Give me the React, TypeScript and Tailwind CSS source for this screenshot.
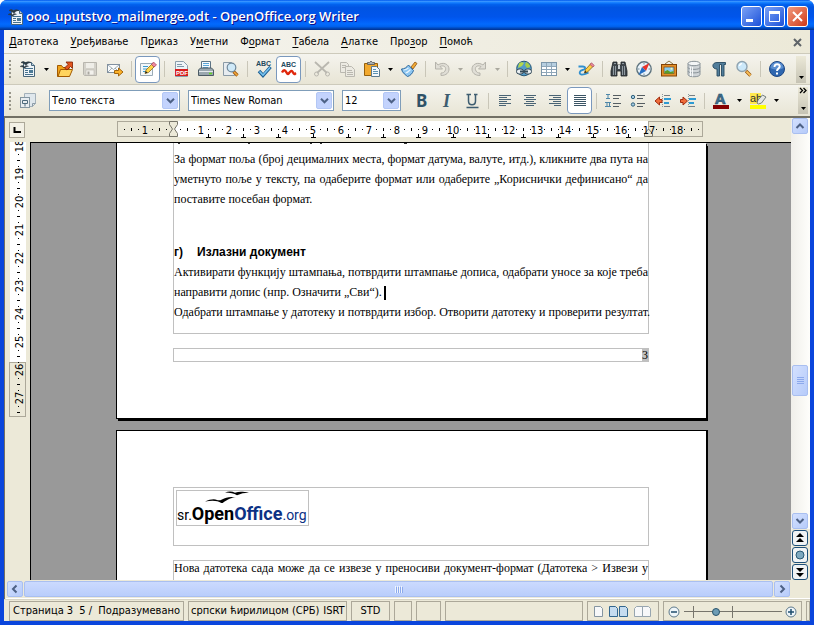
import React from "react";

const ui = "font-['DejaVu_Sans_Condensed','DejaVu_Sans','Liberation_Sans',sans-serif]";
const serif = "font-['Liberation_Serif',serif]";

/* ---------- icons ---------- */

function Svg({ children }: { children: React.ReactNode }) {
  return (
    <svg width="18" height="18" viewBox="0 0 18 18" fill="none" aria-hidden="true" className="shrink-0 overflow-visible">
      {children}
    </svg>
  );
}

function DocumentArt() {
  return (
    <>
      <path d="M4.500 2.500h8l3 3v11h-11z" fill="#eef4f8" stroke="#47657a" />
      <path d="M12.500 2.500v3h3" fill="#b9cfdd" stroke="#47657a" />
      <path d="M6 8.500h8M6 10.500h3M6 12.500h3M6 14.500h8" stroke="#46718c" />
      <rect x="10" y="10" width="4" height="3" fill="#4d7a96" />
      <path d="M2 2.500c2-1.500 3.500-1 4.500.5 1.500-1.500 3.500-1.500 5.500-.5-2.500 0-4 1-5 3C6 4 4.500 3 2 2.500z" fill="#2c3a43" stroke="#2c3a43" strokeWidth=".6" />
      <path d="M1 6.500c2-1.500 3.500-1 4.500.2 1-1 2.500-1.200 4-.4-2 .2-3 .8-3.800 2.200C4.500 7.300 3 6.700 1 6.500z" fill="#2c3a43" stroke="#2c3a43" strokeWidth=".4" />
    </>
  );
}

const icons: Record<string, React.ReactNode> = {
  doc: <DocumentArt />,
  open: (
    <>
      <path d="M1.500 16.500v-11h4l1.500 2h6v9z" fill="#f0a51c" stroke="#a35a00" />
      <path d="M2 16.500l2.500-7h12l-3 7z" fill="#ffd45e" stroke="#a35a00" />
      <path d="M8.500 8l3.500-3.500-2-2.500h6.500v6.500l-2-2-3.500 3.500z" fill="#e2561f" stroke="#7d1d00" strokeWidth=".8" />
    </>
  ),
  save: (
    <>
      <path d="M2.500 2.500h13v13h-12l-1-1z" fill="#d4d2ca" stroke="#b8b6ae" />
      <rect x="5" y="3" width="8" height="5" fill="#efeee8" />
      <rect x="5" y="10" width="8" height="5" fill="#f2f1ec" stroke="#bbb9b1" strokeWidth=".6" />
      <rect x="6.500" y="11.500" width="2" height="3" fill="#aaa8a0" />
    </>
  ),
  mail: (
    <>
      <rect x="1.500" y="4.500" width="12" height="8" fill="#fafcfd" stroke="#8291a0" />
      <path d="M2 5l5.500 4.500L13 5M2 12l4-4M13 12L9 8" stroke="#8c9aa5" strokeWidth=".8" />
      <path d="M8.500 10.500h4V8l4.500 4-4.500 4v-2.500h-4z" fill="#fbb22b" stroke="#9b5a00" strokeWidth=".9" />
    </>
  ),
  edit: (
    <>
      <path d="M1.500 3.500h12v12h-12z" fill="#f3f7fa" stroke="#9aabb7" />
      <path d="M4 6.500h5M4 9h4M4 11.500h3" stroke="#3a9bd0" />
      <path d="M6 13.500l1-3.500 6.500-6.500 2.500 2.500-6.500 6.500z" fill="#ffd54a" stroke="#8a6c1a" strokeWidth=".8" />
      <path d="M12.500 4.500l2-2.500 3 3-2.500 2z" fill="#ef8aa0" stroke="#a33e54" strokeWidth=".7" />
      <path d="M6 13.500l.8-2.500 1.800 1.700z" fill="#222" />
    </>
  ),
  pdf: (
    <>
      <path d="M3.500 1.500h8l4 4v11h-12z" fill="#eef4f8" stroke="#8b9eac" />
      <path d="M5 4.500h5M5 6.500h7" stroke="#7f99aa" />
      <rect x="3" y="9" width="13" height="7" fill="#d81e1e" />
      <text x="4" y="15" fontSize="6" fontWeight="700" fill="#fff" fontFamily="Liberation Sans">PDF</text>
    </>
  ),
  print: (
    <>
      <path d="M4.500 1.500h9v8h-9z" fill="#f6fafd" stroke="#5c7384" />
      <path d="M6 3.500h6M6 5.500h6M6 7.500h5" stroke="#5aa6d8" />
      <path d="M1.500 10l2-2h11l2 2v5.500h-15z" fill="#9aa7af" stroke="#4b5a64" />
      <path d="M2 11.500h14" stroke="#e4e9ec" />
      <path d="M12 13.500h3" stroke="#62d420" strokeWidth="1.500" />
    </>
  ),
  preview: (
    <>
      <path d="M1.500 2.500h8l3 3v10h-11z" fill="#e7ecf0" stroke="#8a9aa6" />
      <path d="M11.500 11.500l4 4" stroke="#9d5b12" strokeWidth="3.200" />
      <path d="M12 12l3.500 3.500" stroke="#f4a83a" strokeWidth="1.600" />
      <circle cx="9.500" cy="7.500" r="4.300" fill="#cfe9f8" stroke="#70899b" strokeWidth="1.200" />
    </>
  ),
  spell: (
    <>
      <text x="1" y="6" fontSize="7" fontWeight="700" fill="#24495e" fontFamily="Liberation Sans">ABC</text>
      <path d="M4 11l4 4.500L15.500 7" stroke="#1c5f94" strokeWidth="3.400" />
      <path d="M4.500 11.500L8 15l7-7.500" stroke="#78c4f0" strokeWidth="1.600" />
    </>
  ),
  auto: (
    <>
      <text x="1" y="7" fontSize="7" fontWeight="700" fill="#24495e" fontFamily="Liberation Sans">ABC</text>
      <path d="M2 12.500c1.500-3 3-3 4.500 0s2 1 3 0 2-3 3.500 0 2 1 3 .5" stroke="#e0270c" strokeWidth="2.400" />
    </>
  ),
  cut: (
    <g stroke="#b9b7af">
      <path d="M2 2l12 11M16 2L4 13" strokeWidth="1.800" />
      <circle cx="3.500" cy="14" r="2" />
      <circle cx="14.500" cy="14" r="2" />
    </g>
  ),
  copy: (
    <g stroke="#bab8b0" fill="#eceae2">
      <path d="M2.500 2.500h6l2 2v8h-8z" />
      <path d="M7.500 6.500h6l3 3v7h-9z" />
      <path d="M4 5.500h4M4 7.500h3M9 10.500h5M9 12.500h6M9 14.500h6" />
    </g>
  ),
  paste: (
    <>
      <path d="M1.500 3.500h13v12h-13z" fill="#f2a92e" stroke="#96600c" />
      <path d="M4.500 4.500v-2h2l1.500-1.500 1.500 1.500h2v2z" fill="#a9b0b4" stroke="#555" strokeWidth=".8" />
      <path d="M8.500 6.500h5l3 3v7h-8z" fill="#f4f8fb" stroke="#5c7a8e" />
      <path d="M10 9.500h3M10 11.500h5M10 13.500h5" stroke="#5d93b4" />
    </>
  ),
  brush: (
    <>
      <path d="M11 7l4-5 2 1.500-4 5.500z" fill="#f3ab35" stroke="#8b5310" strokeWidth=".8" />
      <path d="M1.500 9c3 0 5-1.500 7-4l5 5.500c-1 3-3.500 5.500-6 6-1-1-5.500-3.500-6-7.500z" fill="#8cc5f0" stroke="#2a669c" />
      <path d="M3.500 10c2 0 3.500-.8 5-2M5.500 13c2-.4 3.500-1.800 5-3.500" stroke="#e4f3fd" strokeWidth="1.200" />
    </>
  ),
  undo: (
    <path d="M2.500 2v7h7L7 6.500c4-2 7 1 5 4.500-.8 1.400-2 2-4 2v2.500c5.500 0 8-3 8-6.500 0-5-6-7.500-11-4z" fill="#e0ded6" stroke="#b5b3ab" />
  ),
  redo: (
    <path d="M15.500 2v7h-7L11 6.500c-4-2-7 1-5 4.500.8 1.400 2 2 4 2v2.500c-5.500 0-8-3-8-6.500 0-5 6-7.500 11-4z" fill="#e0ded6" stroke="#b5b3ab" />
  ),
  link: (
    <>
      <circle cx="9" cy="8.500" r="7.300" fill="#549cc9" stroke="#275675" />
      <path d="M4 3.500c2-2 4-1.500 5-.5L7 6 3 8z" fill="#b6d84c" />
      <path d="M11 2c3 1 4 3 4 5l-3 1-2-3z" fill="#a6cd48" />
      <rect x="1.500" y="9" width="7" height="5" rx="2.500" fill="#e8eef1" stroke="#354a58" />
      <rect x="9.500" y="9" width="7" height="5" rx="2.500" fill="#e8eef1" stroke="#354a58" />
      <path d="M5 11.500h8" stroke="#354a58" strokeWidth="2" />
    </>
  ),
  table: (
    <>
      <rect x="1.500" y="2.500" width="15" height="13" fill="#fff" stroke="#7d97aa" />
      <rect x="2" y="3" width="14" height="3" fill="#b7cfe0" />
      <path d="M2 6.500h14M2 9.500h14M2 12.500h14M6.500 3v12M11.500 3v12" stroke="#8fa7b9" />
    </>
  ),
  draw: (
    <>
      <path d="M1.500 6.500h4c4 0 3 3 0 3.500-3 .6-4 4-1 4.500 3 .3 5-1 7-2" stroke="#2f8fd0" strokeWidth="1.800" />
      <path d="M7.500 13l1-3.500 5.500-6 2.500 2.500-6 6z" fill="#ffcf45" stroke="#7a5b10" strokeWidth=".8" />
      <path d="M13 4.500l1.500-1.700L17.300 5.500 15.800 7z" fill="#ec8aa0" stroke="#95394d" strokeWidth=".6" />
      <path d="M7.500 13l.7-2.300 1.600 1.500z" fill="#222" />
    </>
  ),
  find: (
    <>
      <path d="M3 2h4v3h4V2h4l2 9v5h-6v-5H7v5H1v-5z" fill="#3f474d" stroke="#1e2327" strokeWidth=".8" />
      <path d="M3.500 6v9M5.500 6v9M12.500 6v9M14.500 6v9M4 3.500h2M12 3.500h2" stroke="#9aa4aa" strokeWidth=".9" />
      <rect x="8" y="5" width="2" height="4" fill="#cdd3d6" />
    </>
  ),
  nav: (
    <>
      <circle cx="9" cy="9" r="7.200" fill="#eaf4fb" stroke="#5f747f" strokeWidth="1.400" />
      <path d="M9 3v1.500M9 13.500V15M3 9h1.500M13.500 9H15" stroke="#738a99" />
      <path d="M14.500 3L7 7l4 4z" fill="#e8342b" />
      <path d="M3.500 15L7 7l4 4z" fill="#266fc4" />
    </>
  ),
  gallery: (
    <>
      <path d="M5 4l4-3 4 3" stroke="#8b7442" />
      <rect x="1.500" y="4.500" width="15" height="11.500" fill="#e2902b" stroke="#824306" />
      <rect x="4" y="7" width="10" height="6.500" fill="#86ccef" stroke="#824306" strokeWidth=".7" />
      <path d="M4.500 13.500v-2l3-1.500 3 2 3-1v2.500z" fill="#5b9c26" />
      <circle cx="11.500" cy="8.800" r="1" fill="#fff6a8" />
    </>
  ),
  db: (
    <>
      <path d="M3 3.500v11c0 3 12 3 12 0v-11" fill="#cfd4d7" stroke="#8a9399" />
      <path d="M3 7.500c0 2.500 12 2.500 12 0M3 11c0 2.500 12 2.500 12 0" stroke="#8a9399" />
      <ellipse cx="9" cy="3.500" rx="6" ry="2.200" fill="#f4f6f7" stroke="#8a9399" />
      <path d="M5.500 6.500v9.500M7.500 7v9.500" stroke="#f5f7f8" />
    </>
  ),
  pilcrow: (
    <path d="M15.500 2.500H7C1.500 2.500 1.500 9 7 9v7h2.500V4.500h2V16H14V4.500h1.500z" fill="#527e9b" stroke="#274a61" strokeWidth=".9" />
  ),
  zoom: (
    <>
      <path d="M11 11l4.500 4.500" stroke="#97560e" strokeWidth="3.200" />
      <path d="M11.500 11.500l4 4" stroke="#fbc05a" strokeWidth="1.800" />
      <circle cx="7" cy="6.500" r="5" fill="#cbe8fa" stroke="#8fa3b0" strokeWidth="1.400" />
      <path d="M4.500 6c.3-1.500 1.300-2.300 2.500-2.300" stroke="#fff" strokeWidth="1.200" />
    </>
  ),
  help: (
    <>
      <circle cx="9" cy="9" r="7.500" fill="#2f67b0" stroke="#1c4684" />
      <path d="M2.500 8a6.500 6 0 0 1 13 0c-4 2-9 2-13 0z" fill="#5b8fd0" />
      <path d="M6.500 7c0-4 5.500-3.500 5.200-.4C11.500 8.500 9 8.500 9 11M9 12.500v2" stroke="#fff" strokeWidth="2" />
    </>
  ),
  styles: (
    <>
      <path d="M5.500 1.500h11v10l-3 3h-8z" fill="#dfe7ec" stroke="#a3b0b9" />
      <path d="M13.500 14.500v-3h3" stroke="#8b9ba6" />
      <rect x="1.500" y="5.500" width="9" height="10" fill="#e8edf0" stroke="#8496a1" />
      <path d="M3.500 8.500h5v3h-5zM6 11.500v3" stroke="#4e6b7d" />
    </>
  ),
  bold: <text x="3" y="15" fontSize="17" fontWeight="700" fill="#2f5267" fontFamily="Noto Sans">B</text>,
  italic: <text x="5" y="15" fontSize="18" fontStyle="italic" fontWeight="700" fill="#3e5d70" fontFamily="Liberation Serif">I</text>,
  underline: (
    <path d="M3.500 2.500h4.500M11 2.500h3.500M5.500 3v6c0 5 7 5 7 0V3M3.500 15.500h12" stroke="#3e5d70" strokeWidth="1.500" />
  ),
  left: <path d="M3 3.500h12M3 5.500h8M3 7.500h12M3 9.500h8M3 11.500h12M3 13.500h7" stroke="#4a6475" />,
  center: <path d="M3 3.500h12M5 5.500h8M3 7.500h12M5 9.500h8M3 11.500h12M5 13.500h8" stroke="#4a6475" />,
  right: <path d="M3 3.500h12M7 5.500h8M3 7.500h12M7 9.500h8M3 11.500h12M8 13.500h7" stroke="#4a6475" />,
  justify: <path d="M3 3.500h12M3 5.500h12M3 7.500h12M3 9.500h12M3 11.500h12M3 13.500h12" stroke="#3b5566" />,
  numbers: (
    <>
      <path d="M2 2.500h4M4 2v5M2 6.500h4M1 10.500h6M1 14.500h6M3 10v5M5.500 10v5" stroke="#4d86a8" />
      <path d="M9 3.500h8M9 6.500h6M9 11.500h8M9 14.500h6" stroke="#555d62" />
    </>
  ),
  bullets: (
    <>
      <circle cx="4" cy="5" r="1.700" fill="#a7cbe0" stroke="#2f617e" />
      <circle cx="4" cy="12.500" r="1.700" fill="#a7cbe0" stroke="#2f617e" />
      <path d="M8 3.500h8M8 6.500h6M8 11.500h8M8 14.500h6" stroke="#555d62" />
    </>
  ),
  outdent: (
    <>
      <path d="M8.500 2v14" stroke="#8b969c" strokeDasharray="1 1" />
      <path d="M10 3.500h6M10 14.500h6" stroke="#777f84" />
      <path d="M10 7h7M10 11h5" stroke="#2d9bd4" strokeWidth="2" />
      <path d="M1 9l4.500-4v2.500H8v3H5.500V13z" fill="#f06c3a" stroke="#a02c10" />
    </>
  ),
  indent: (
    <>
      <path d="M9.500 2v14" stroke="#8b969c" strokeDasharray="1 1" />
      <path d="M10 3.500h6M10 14.500h6" stroke="#777f84" />
      <path d="M10 7h7M10 11h5" stroke="#2d9bd4" strokeWidth="2" />
      <path d="M8.500 9L4 5v2.500H1.500v3H4V13z" fill="#f06c3a" stroke="#a02c10" />
    </>
  ),
  color: (
    <>
      <text x="3" y="12" fontSize="15" fontWeight="700" fill="#3e6f90" stroke="#22445b" strokeWidth=".5" fontFamily="Noto Sans">A</text>
      <rect x="1" y="13" width="16" height="4" fill="#840000" />
    </>
  ),
  highlight: (
    <>
      <rect x="1" y="1" width="11" height="11" fill="#ffe94d" />
      <text x="1" y="10" fontSize="11" fill="#333" fontFamily="Liberation Sans">ab</text>
      <path d="M8 11l1-3 4.500-5 3.500 2-4.500 6-3 1z" fill="#e4e7e5" stroke="#66706f" strokeWidth=".9" />
      <rect x="1" y="13" width="16" height="4" fill="#ffff00" />
    </>
  ),
};

/* ---------- toolbar parts ---------- */

function ToolButton({ icon, label, pressed = false }: { icon: string; label: string; pressed?: boolean }) {
  return (
    <button
      type="button"
      aria-label={label}
      aria-pressed={pressed || undefined}
      className={
        pressed
          ? "flex h-[27px] w-[25px] shrink-0 items-center justify-center rounded-[4px] border border-[#7a98bd] bg-white"
          : "flex h-[27px] w-[25px] shrink-0 items-center justify-center"
      }
    >
      <Svg>{icons[icon]}</Svg>
    </button>
  );
}

function Drop({ label, dim = false }: { label: string; dim?: boolean }) {
  return (
    <button type="button" aria-label={label} className="flex h-6 w-3 shrink-0 items-center justify-center">
      <svg width="5" height="3" viewBox="0 0 5 3" aria-hidden="true">
        <path d="M0 0h5L2.500 3z" fill={dim ? "#aaa89e" : "#000"} />
      </svg>
    </button>
  );
}

function Sep() {
  return (
    <span className="flex w-2 shrink-0 justify-center">
      <span className="h-4 w-px bg-[#c9c6b8]" />
    </span>
  );
}

function Grip() {
  return (
    <span className="flex w-[11px] shrink-0 justify-center">
      <svg width="2" height="18" viewBox="0 0 2 18" aria-hidden="true">
        <path d="M1 0v18" stroke="#98968a" strokeWidth="2" strokeDasharray="2 2" />
      </svg>
    </span>
  );
}

function Combo({ label, value, width }: { label: string; value: string; width: string }) {
  return (
    <label className={`flex h-[21px] shrink-0 items-center border border-[#7f9db9] bg-white p-px ${width}`}>
      <select aria-label={label} defaultValue={value} className="min-w-0 flex-1 appearance-none bg-white pl-px text-[11px] leading-4 text-black outline-none">
        <option>{value}</option>
      </select>
      <span className="pointer-events-none flex h-[17px] w-4 items-center justify-center rounded-[2px] border border-[#b3c7f5] bg-[#c3d3fd]">
        <svg width="9" height="6" viewBox="0 0 9 6" aria-hidden="true">
          <path d="M1 .8l3.500 3.500L8 .8" fill="none" stroke="#4d6185" strokeWidth="2" />
        </svg>
      </span>
    </label>
  );
}

function Overflow({ more = false }: { more?: boolean }) {
  return (
    <button type="button" aria-label="Још дугмади" className="ml-auto flex h-[27px] w-2.5 shrink-0 flex-col items-center justify-between bg-linear-to-b from-[#ece9d8] to-[#c6c3b4] pb-1">
      <svg width="8" height="7" viewBox="0 0 8 7" aria-hidden="true">
        {more && <path d="M1 1l2.500 2.500L1 6M4.500 1L7 3.500 4.500 6" fill="none" stroke="#000" strokeWidth="1.300" />}
      </svg>
      <svg width="5" height="3" viewBox="0 0 5 3" aria-hidden="true">
        <path d="M0 0h5L2.500 3z" />
      </svg>
    </button>
  );
}

/* ---------- rulers ---------- */

const CM = 28;

function HorizontalRuler() {
  const marks: React.ReactNode[] = [];
  for (let q = -7; q < 76; q++) {
    const x = 57 + q * 7;
    if (q === 0) continue;
    if (q % 4 === 0) {
      marks.push(
        <text key={q} x={x} y="13" textAnchor="middle" fontSize="11">
          {Math.abs(q / 4)}
        </text>
      );
    } else if (q % 2 === 0) {
      marks.push(<rect key={q} x={x} y="7" width="1" height="3" />);
    } else {
      marks.push(<rect key={q} x={x} y="8" width="1" height="1" />);
    }
  }
  return (
    <svg width="590" height="18" viewBox="0 0 590 18" role="img" aria-label="Хоризонтални лењир" className={`shrink-0 ${ui}`}>
      <rect x="1.500" y=".5" width="585" height="15" fill="#ece9d8" stroke="#aca899" />
      <rect x="57" y="0" width="475" height="16" fill="#fff" />
      <path d="M532.500 0v16" stroke="#aca899" />
      {Array.from({ length: 13 }, (_, i) => (
        <path key={i} d={`M${92.5 + i * 35} 13v3M${90 + i * 35} 16.500h5`} stroke="#000" />
      ))}
      <path d="M53.500 .5h8v3l-3 4.500 3 4.500v3h-8v-3l3-4.500-3-4.500z" fill="#ece9d8" stroke="#77756a" />
      <path d="M528.500 15.500v-3l4-4.500 4 4.500v3z" fill="#ece9d8" stroke="#77756a" />
      {marks}
    </svg>
  );
}

function VerticalRuler() {
  return (
    <svg width="18" height="276" viewBox="0 0 18 276" role="img" aria-label="Вертикални лењир" className={`shrink-0 ${ui}`}>
      <rect x="1" y="0" width="16" height="221" fill="#fff" />
      <rect x=".5" y="220.500" width="16" height="54" fill="#ece9d8" stroke="#aca899" />
      {Array.from({ length: 10 }, (_, i) => {
        const y = 4 + i * CM;
        return (
          <g key={i}>
            <text x="0" y="0" transform={`translate(14 ${y}) rotate(-90)`} textAnchor="middle" fontSize="11">
              {18 + i}
            </text>
            <rect x="9" y={y + 8} width="1" height="1" />
            <rect x="8" y={y + 14} width="3" height="1" />
            {i < 9 && <rect x="9" y={y + 20} width="1" height="1" />}
          </g>
        );
      })}
    </svg>
  );
}

/* ---------- scroll bars ---------- */

const scrollFace = "flex shrink-0 items-center justify-center rounded-[2px] border border-[#a9bff0] bg-linear-to-br from-[#d3e0fe] to-[#b6cbfa]";

function ScrollButton({ label, d }: { label: string; d: string }) {
  return (
    <button type="button" aria-label={label} className={`size-4 ${scrollFace}`}>
      <svg width="10" height="10" viewBox="0 0 10 10" aria-hidden="true">
        <path d={d} fill="none" stroke="#4d6185" strokeWidth="2" />
      </svg>
    </button>
  );
}

function JumpButton({ label, children }: { label: string; children: React.ReactNode }) {
  return (
    <button type="button" aria-label={label} className="flex size-4 shrink-0 items-center justify-center rounded-[3px] border border-[#1e4f78] bg-[#f1f3f4]">
      <svg width="12" height="12" viewBox="0 0 12 12" aria-hidden="true">
        {children}
      </svg>
    </button>
  );
}

/* ---------- document ---------- */

function Line({ children, last = false }: { children: React.ReactNode; last?: boolean }) {
  return (
    <p className={last ? "whitespace-nowrap leading-5" : "whitespace-nowrap text-justify leading-5 [text-align-last:justify]"}>
      {children}
    </p>
  );
}

function Logo() {
  return (
    <div className="flex h-9 w-[133px] flex-col border border-[#c0c0c0]">
      <svg width="131" height="12" viewBox="0 0 131 12" aria-hidden="true" className="shrink-0">
        <path d="M28 10.500c5-2 9-3 12-1.500 1.500.5 3 .5 5-.5 4-2 8-3.500 14-2-5 .2-8 1.500-14 6-4-3-9-3.500-17-2z" />
        <path d="M48 1.500c4-1.500 7-1.300 10 .2 4-1.200 8-1 14 0-5 .2-8 .6-12 2.600-3-2-7-2.800-12-2.800z" />
      </svg>
      <div className="flex items-baseline whitespace-nowrap font-['Roboto',sans-serif] text-[14px] leading-[22px] text-black">
        <span>sr.</span>
        <b className="text-[18px]">Open</b>
        <b className="text-[18px] text-[#0b3184]">Office</b>
        <span className="text-[#0b3184]">.org</span>
      </div>
    </div>
  );
}

/* ---------- status bar ---------- */

function Cell({ width, children }: { width: string; children?: React.ReactNode }) {
  return <div className={`flex h-5 shrink-0 items-center overflow-hidden whitespace-nowrap border border-[#aca899] pt-0.5 ${width}`}>{children}</div>;
}

const menus: [string, string, string][] = [
  ["", "Д", "атотека"],
  ["", "У", "ређивање"],
  ["П", "р", "иказ"],
  ["У", "м", "етни"],
  ["Ф", "о", "рмат"],
  ["", "Т", "абела"],
  ["", "А", "латке"],
  ["Про", "з", "ор"],
  ["", "П", "омоћ"],
];

const titleButton = "flex size-[21px] items-center justify-center rounded-[3px] border border-white";

export default function App() {
  return (
    <div className={`flex h-screen w-full flex-col overflow-hidden rounded-t-[7px] bg-[#0a45dc] text-[11px] text-black ${ui}`}>
      <header className="flex h-[30px] shrink-0 items-center bg-[linear-gradient(#0058ee,#3593ff_5%,#127dff_9%,#0262ee_15%,#0054e3_25%,#0055eb_56%,#005bf5_66%,#026afe_80%,#0062ef_88%,#0040ab_96%,#003092)] pl-[7px] pr-1.5 pt-[3px]">
        <Svg>{icons.doc}</Svg>
        <h1 className="ml-px flex-1 whitespace-nowrap font-['Open_Sans',sans-serif] text-[13px] font-semibold text-white [text-shadow:1px_1px_#0f1089]">
          ooo_uputstvo_mailmerge.odt - OpenOffice.org Writer
        </h1>
        <div className="flex gap-0.5">
          <button type="button" aria-label="Умањи" className={`${titleButton} bg-linear-to-br from-[#7ba0f5] to-[#1c4fd8]`}>
            <svg width="13" height="13" viewBox="0 0 13 13" aria-hidden="true">
              <rect x="1" y="9" width="7" height="3" fill="#fff" />
            </svg>
          </button>
          <button type="button" aria-label="Увећај" className={`${titleButton} bg-linear-to-br from-[#7ba0f5] to-[#1c4fd8]`}>
            <svg width="13" height="13" viewBox="0 0 13 13" aria-hidden="true">
              <path d="M1.500 2v9.500h10V2" fill="none" stroke="#fff" />
              <rect x="1" y="1" width="11" height="3" fill="#fff" />
            </svg>
          </button>
          <button type="button" aria-label="Затвори" className={`${titleButton} bg-linear-to-br from-[#f0987c] to-[#cf3510]`}>
            <svg width="13" height="13" viewBox="0 0 13 13" aria-hidden="true">
              <path d="M2 2l9 9M11 2l-9 9" stroke="#fff" strokeWidth="2" />
            </svg>
          </button>
        </div>
      </header>

      <div className="mx-1 mb-1 flex min-h-0 flex-1 flex-col bg-[#ece9d8]">
        <nav className="flex h-6 shrink-0 items-center border-b border-[#cdcabb] bg-linear-to-r from-[#f6f5f1] to-[#ece9d8] pt-px">
          {menus.map(([before, key, after]) => (
            <button key={before + key + after} type="button" className="shrink-0 pl-[5px] pr-[7px] leading-4">
              {before}
              <u className="underline-offset-2">{key}</u>
              {after}
            </button>
          ))}
          <button type="button" aria-label="Затвори документ" className="ml-auto mr-2">
            <svg width="9" height="9" viewBox="0 0 9 9" aria-hidden="true">
              <path d="M1 1l7 7M8 1L1 8" stroke="#5f6468" strokeWidth="2" />
            </svg>
          </button>
        </nav>

        <div role="toolbar" aria-label="Стандардна" className="flex h-[31px] shrink-0 items-center border-b border-[#cdcabb] bg-linear-to-b from-[#f5f4ee] to-[#e8e5d5] pr-1">
          <Grip />
          <ToolButton icon="doc" label="Ново" />
          <Drop label="Ново – избор" />
          <ToolButton icon="open" label="Отвори" />
          <ToolButton icon="save" label="Сачувај" />
          <ToolButton icon="mail" label="Пошаљи е-поштом" />
          <Sep />
          <ToolButton icon="edit" label="Уреди датотеку" pressed />
          <Sep />
          <ToolButton icon="pdf" label="Извези као PDF" />
          <ToolButton icon="print" label="Штампај" />
          <ToolButton icon="preview" label="Преглед стране" />
          <Sep />
          <ToolButton icon="spell" label="Провера писања" />
          <ToolButton icon="auto" label="Аутоматска провера" pressed />
          <Sep />
          <ToolButton icon="cut" label="Исеци" />
          <ToolButton icon="copy" label="Умножи" />
          <ToolButton icon="paste" label="Убаци" />
          <Drop label="Убаци – избор" />
          <ToolButton icon="brush" label="Четкица" />
          <Sep />
          <ToolButton icon="undo" label="Опозови" />
          <Drop label="Опозови – избор" dim />
          <ToolButton icon="redo" label="Понови" />
          <Drop label="Понови – избор" dim />
          <Sep />
          <ToolButton icon="link" label="Хипервеза" />
          <ToolButton icon="table" label="Табела" />
          <Drop label="Табела – избор" />
          <ToolButton icon="draw" label="Цртање" />
          <Sep />
          <ToolButton icon="find" label="Нађи и замени" />
          <ToolButton icon="nav" label="Навигатор" />
          <ToolButton icon="gallery" label="Галерија" />
          <ToolButton icon="db" label="Извори података" />
          <ToolButton icon="pilcrow" label="Недруковани знаци" />
          <ToolButton icon="zoom" label="Увеличање" />
          <Sep />
          <ToolButton icon="help" label="Помоћ" />
          <Overflow />
        </div>

        <div role="toolbar" aria-label="Форматирање" className="flex h-[31px] shrink-0 items-center bg-linear-to-b from-[#f5f4ee] to-[#e8e5d5] pr-0.5">
          <Grip />
          <ToolButton icon="styles" label="Стилови" />
          <div className="mx-2 flex gap-2 pl-px">
            <Combo label="Стил" value="Тело текста" width="w-[131px]" />
            <Combo label="Фонт" value="Times New Roman" width="w-[146px]" />
            <Combo label="Величина" value="12" width="w-[59px]" />
          </div>
          <ToolButton icon="bold" label="Подебљано" />
          <ToolButton icon="italic" label="Курзив" />
          <ToolButton icon="underline" label="Подвучено" />
          <Sep />
          <ToolButton icon="left" label="Лево" />
          <ToolButton icon="center" label="Средина" />
          <ToolButton icon="right" label="Десно" />
          <ToolButton icon="justify" label="Обострано" pressed />
          <Sep />
          <ToolButton icon="numbers" label="Набрајање" />
          <ToolButton icon="bullets" label="Ознаке" />
          <ToolButton icon="outdent" label="Смањи увлачење" />
          <ToolButton icon="indent" label="Повећај увлачење" />
          <Sep />
          <ToolButton icon="color" label="Боја фонта" />
          <Drop label="Боја фонта – избор" />
          <ToolButton icon="highlight" label="Истицање" />
          <Drop label="Истицање – избор" />
          <Overflow more />
        </div>

        <main className="flex min-h-0 flex-1 flex-col border-l border-t-2 border-[#716f64] bg-[#ece9d8] pl-px">
          <div className="flex min-h-0 flex-1">
            <div className="flex min-w-0 flex-1 flex-col">
              <div className="flex h-6 shrink-0 items-center pb-1 pt-1">
                <div className="flex w-6 shrink-0 items-center pl-[3px]">
                  <button type="button" aria-label="Врста табулатора" className="flex size-4 items-center justify-center border border-[#aca899] bg-[#f3f1e6]">
                    <svg width="8" height="8" viewBox="0 0 8 8" aria-hidden="true">
                      <path d="M1.500 1v5H8" fill="none" stroke="#000" strokeWidth="2" />
                    </svg>
                  </button>
                </div>
                <div className="flex min-w-0 flex-1 justify-center">
                  <HorizontalRuler />
                </div>
              </div>
              <div className="flex min-h-0 flex-1">
                <div className="flex w-6 shrink-0 overflow-hidden pl-[3px]">
                  <VerticalRuler />
                </div>
                <div className={`flex min-w-0 flex-1 flex-col items-center overflow-hidden border-l border-t border-black bg-[#999] text-[12px] ${serif}`}>
                  <article className="flex w-[590px] shrink-0 flex-col border-l border-black bg-white pl-14 pr-[57px] shadow-[0_1px_#000,1px_1px_#000,2px_3px_#000]">
                    <section className="flex flex-col border-x border-b border-[#c0c0c0] pb-[11px]">
                      <svg width="474" height="2" viewBox="0 0 474 2" aria-hidden="true" className="mb-1">
                        <path d="M4 .5h2M74 .5h2M136 .5h2M146 .5h2M230 .5h3" stroke="#333" />
                      </svg>
                      <Line>За формат поља (број децималних места, формат датума, валуте, итд.), кликните два пута на</Line>
                      <Line>уметнуто поље у тексту, па одаберите формат или одаберите „Кориснички дефинисано“ да</Line>
                      <Line last>поставите посебан формат.</Line>
                      <h2 className="mt-[33px] flex gap-3.5 font-['Liberation_Sans',sans-serif] text-[12px] font-bold leading-5">
                        <span>г)</span>
                        <span>Излазни документ</span>
                      </h2>
                      <Line>Активирати функцију штампања, потврдити штампање дописа, одабрати уносе за које треба</Line>
                      <Line last>
                        направити допис (нпр. Означити „Сви“).
                        <span className="ml-0.5 inline-block h-3.5 w-0.5 bg-black align-middle" />
                      </Line>
                      <Line>Одабрати штампање у датотеку и потврдити избор. Отворити датотеку и проверити резултат.</Line>
                    </section>
                    <footer className="mb-14 mt-3.5 flex h-3.5 justify-end border border-[#c0c0c0] leading-3">
                      <span className="bg-[#c0c0c0]">3</span>
                    </footer>
                  </article>
                  <article className="mt-3 flex h-[300px] w-[590px] shrink-0 flex-col border-l border-t border-black bg-white pl-14 pr-[57px] pt-14 shadow-[2px_0_#000]">
                    <header className="h-[59px] shrink-0 border border-[#c0c0c0] pl-0.5 pt-0.5">
                      <Logo />
                    </header>
                    <section className="mt-3.5 flex-1 border-x border-t border-[#c0c0c0]">
                      <p className="whitespace-nowrap leading-[14px] [text-align-last:justify]">Нова датотека сада може да се извезе у преносиви документ-формат (Датотека &gt; Извези у</p>
                    </section>
                  </article>
                </div>
              </div>
            </div>

            <div className="flex w-[19px] shrink-0 flex-col bg-linear-to-r from-[#f0efea] to-[#fefefb] pl-px pr-0.5">
              <ScrollButton label="Горе" d="M1.500 7L5 3.500 8.500 7" />
              <div className="grow-[231]" />
              <button type="button" aria-label="Вертикални клизач" className={`h-[31px] w-4 ${scrollFace}`}>
                <svg width="7" height="8" viewBox="0 0 7 8" aria-hidden="true">
                  <path d="M0 .5h7M0 2.500h7M0 4.500h7M0 6.500h7" stroke="#8ca9ec" />
                </svg>
              </button>
              <div className="grow-[117]" />
              <ScrollButton label="Доле" d="M1.500 3L5 6.500 8.500 3" />
              <div className="-mr-0.5 flex flex-col gap-px bg-[#ece9d8] pt-px">
                <JumpButton label="Претходна страна">
                  <path d="M6 1l4 4H2zM6 6l4 4H2z" />
                </JumpButton>
                <JumpButton label="Навигација">
                  <circle cx="6" cy="6" r="4" fill="#7fa9bf" stroke="#2b5a75" />
                </JumpButton>
                <JumpButton label="Следећа страна">
                  <path d="M2 2h8L6 6zM2 7h8l-4 4z" />
                </JumpButton>
              </div>
            </div>
          </div>

          <div className="flex h-[19px] shrink-0 items-center gap-px border-b border-[#fff] pl-px pr-5">
            <ScrollButton label="Лево" d="M6.500 1.500L3 5l3.500 3.500" />
            <button type="button" aria-label="Хоризонтални клизач" className="flex h-4 flex-1 items-center justify-center rounded-[2px] border border-[#a9bff0] bg-linear-to-b from-[#cbdafe] to-[#b9cdfb]">
              <svg width="8" height="7" viewBox="0 0 8 7" aria-hidden="true">
                <path d="M.5 0v7M2.500 0v7M4.500 0v7M6.500 0v7" stroke="#eef4fe" />
                <path d="M1.500 1v6M3.500 1v6M5.500 1v6M7.500 1v6" stroke="#8ca9ec" />
              </svg>
            </button>
            <ScrollButton label="Десно" d="M3.500 1.500L7 5 3.500 8.500" />
          </div>
        </main>

        <footer className="flex h-[22px] shrink-0 items-center gap-1 overflow-hidden border-t border-[#d8d5c6] pl-[5px]">
          <Cell width="w-[175px] justify-between px-[3px]">
            <span>Страница 3</span>
            <span>5 /</span>
            <span>Подразумевано</span>
          </Cell>
          <Cell width="w-[159px] gap-1 pl-0.5">
            <span>српски ћирилицом (СРБ)</span>
            <span>ISRT</span>
          </Cell>
          <Cell width="w-[39px] justify-center">STD</Cell>
          <Cell width="w-[18px]" />
          <Cell width="w-[25px]" />
          <Cell width="min-w-0 flex-1" />
          <Cell width="w-[72px] justify-center">
            <svg width="60" height="13" viewBox="0 0 60 13" role="img" aria-label="Распоред страна">
              <path d="M1.500 1.500h6l2 2v8h-8z" fill="#f7f8f9" stroke="#8595a1" />
              <path d="M16.500 1.500h6l2 2v8h-8zM26.500 1.500h6l2 2v8h-8z" fill="#c5dcf0" stroke="#33678f" />
              <path d="M43.500 1.500h6v10h-8v-8zM49.500 1.500h6l2 2v8h-8z" fill="#f7f8f9" stroke="#97a5af" />
            </svg>
          </Cell>
          <Cell width="w-[139px] justify-between px-1">
            <button type="button" aria-label="Умањи приказ">
              <svg width="12" height="12" viewBox="0 0 12 12" aria-hidden="true">
                <circle cx="6" cy="6" r="5" fill="#eef5f9" stroke="#5f7a8b" />
                <path d="M3 6h6" stroke="#1f4d6d" strokeWidth="1.500" />
              </svg>
            </button>
            <svg width="98" height="12" viewBox="0 0 98 12" role="img" aria-label="Увеличање приказа">
              <path d="M0 5.500h98" stroke="#77756c" />
              <path d="M9.500 0v12M48.500 0v12" stroke="#77756c" />
              <circle cx="32" cy="6" r="3.500" fill="#6d9cb5" stroke="#29536b" />
            </svg>
            <button type="button" aria-label="Увећај приказ">
              <svg width="12" height="12" viewBox="0 0 12 12" aria-hidden="true">
                <circle cx="6" cy="6" r="5" fill="#eef5f9" stroke="#5f7a8b" />
                <path d="M3 6h6M6 3v6" stroke="#1f4d6d" strokeWidth="1.500" />
              </svg>
            </button>
          </Cell>
          <Cell width="w-1" />
        </footer>
      </div>
    </div>
  );
}
